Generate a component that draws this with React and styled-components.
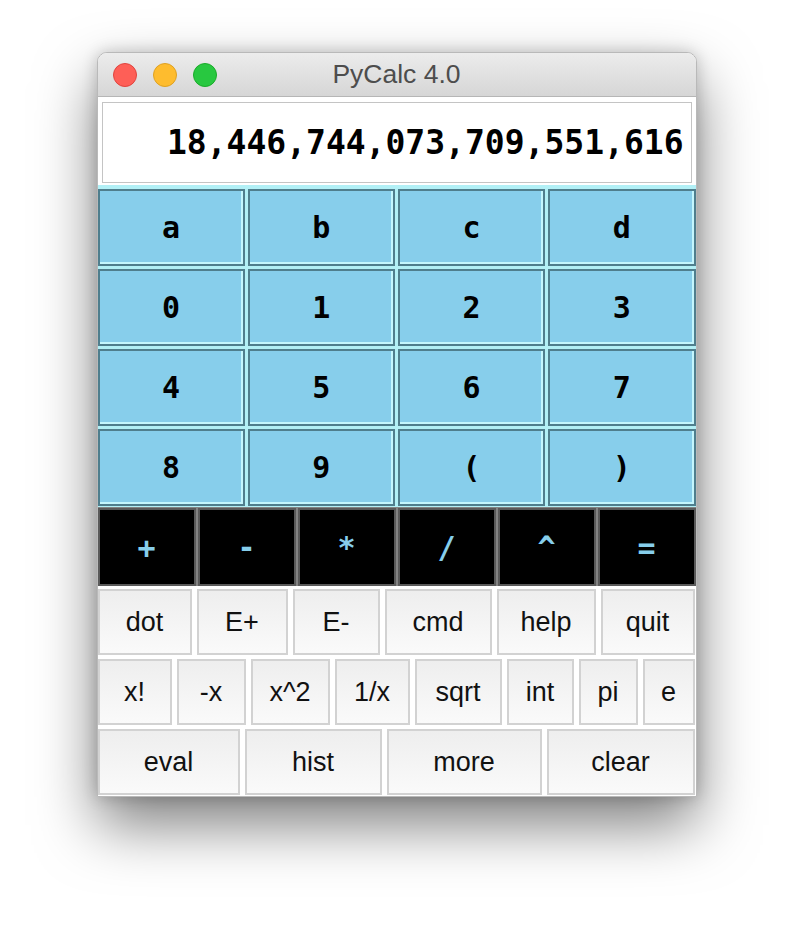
import React from 'react';
import styled, { createGlobalStyle } from 'styled-components';

const GlobalStyle = createGlobalStyle`
  html, body {
    margin: 0;
    padding: 0;
    background: #ffffff;
  }
  * {
    box-sizing: border-box;
  }
`;

const letterKeys = ['a', 'b', 'c', 'd', '0', '1', '2', '3', '4', '5', '6', '7', '8', '9', '(', ')'];
const opKeys = ['+', '-', '*', '/', '^', '='];

const toolRows = [
  [['dot', 94], ['E+', 91], ['E-', 87], ['cmd', 107], ['help', 99], ['quit', 94]],
  [['x!', 74], ['-x', 69], ['x^2', 79], ['1/x', 75], ['sqrt', 87], ['int', 67], ['pi', 59], ['e', 52]],
  [['eval', 142], ['hist', 137], ['more', 155], ['clear', 148]],
];

const App = () => {
  return (
    <Page>
      <GlobalStyle />
      <Window>
        <TitleBar>
          <Lights>
            <Light color="#fe5f57" edge="#e0443e" />
            <Light color="#febc2e" edge="#dea123" />
            <Light color="#28c840" edge="#1aab29" />
          </Lights>
          <Title>PyCalc 4.0</Title>
        </TitleBar>
        <DisplayArea>
          <Display>18,446,744,073,709,551,616</Display>
        </DisplayArea>
        <KeyGrid>
          {letterKeys.map((k) => (
            <SkyKey key={k}>{k}</SkyKey>
          ))}
        </KeyGrid>
        <OpRow>
          {opKeys.map((k) => (
            <OpKey key={k}>{k}</OpKey>
          ))}
        </OpRow>
        <ToolArea>
          {toolRows.map((row, i) => (
            <ToolRow key={i}>
              {row.map(([label, w]) => (
                <ToolKey key={label} w={w}>{label}</ToolKey>
              ))}
            </ToolRow>
          ))}
        </ToolArea>
      </Window>
    </Page>
  );
};

const Page = styled.div`
  width: 793px;
  height: 945px;
  padding-top: 52px;
  display: flex;
  justify-content: center;
  align-items: flex-start;
`;

const Window = styled.div`
  width: 600px;
  display: flex;
  flex-direction: column;
  background: #ffffff;
  border: 1px solid #b9b9b9;
  border-radius: 10px 10px 0 0;
  overflow: hidden;
  box-shadow: 0 28px 60px rgba(0, 0, 0, 0.5), 0 0 16px rgba(0, 0, 0, 0.2);
`;

const TitleBar = styled.div`
  position: relative;
  height: 44px;
  display: flex;
  align-items: center;
  justify-content: center;
  background: linear-gradient(#ececec, #d6d6d6);
  border-bottom: 1px solid #b6b6b6;
`;

const Lights = styled.div`
  position: absolute;
  left: 15px;
  top: 10px;
  display: flex;
  gap: 16px;
`;

const Light = styled.span`
  width: 24px;
  height: 24px;
  border-radius: 50%;
  background: ${(p) => p.color};
  border: 1px solid ${(p) => p.edge};
`;

const Title = styled.div`
  font-family: "Liberation Sans", Arial, sans-serif;
  font-size: 26.5px;
  color: #4d4d4d;
`;

const DisplayArea = styled.div`
  padding: 5px 4px 2px 4px;
`;

const Display = styled.div`
  height: 81px;
  border: 1px solid #c4c4c4;
  background: #ffffff;
  display: flex;
  align-items: center;
  justify-content: flex-end;
  padding-right: 7px;
  font-family: "DejaVu Sans Mono", "Liberation Mono", monospace;
  font-weight: bold;
  font-size: 33px;
  color: #000000;
`;

const KeyGrid = styled.div`
  display: grid;
  grid-template-columns: repeat(4, 1fr);
  grid-auto-rows: 77px;
  gap: 3px;
  padding: 4px 0 2px 0;
  background: #b2f0f6;
`;

const SkyKey = styled.div`
  display: flex;
  align-items: center;
  justify-content: center;
  background: #87ceeb;
  border: 2px solid #4f7e8d;
  box-shadow: inset -2px -2px 0 #c4f6fd;
  font-family: "DejaVu Sans Mono", "Liberation Mono", monospace;
  font-weight: bold;
  font-size: 30px;
  color: #000000;
`;

const OpRow = styled.div`
  display: grid;
  grid-template-columns: repeat(6, 1fr);
  gap: 2px;
  height: 78px;
  background: #707070;
`;

const OpKey = styled.div`
  display: flex;
  align-items: center;
  justify-content: center;
  background: #000000;
  border: 2px solid #5a5a5a;
  box-shadow: 0 0 0 1px #848484;
  font-family: "DejaVu Sans Mono", "Liberation Mono", monospace;
  font-weight: bold;
  font-size: 30px;
  color: #87ceeb;
`;

const ToolArea = styled.div`
  display: flex;
  flex-direction: column;
  gap: 4px;
  padding: 3px 1px 1px 0;
  background: #ffffff;
`;

const ToolRow = styled.div`
  display: flex;
  gap: 5px;
  height: 66px;
`;

const ToolKey = styled.div`
  flex: 0 0 ${(p) => p.w}px;
  display: flex;
  align-items: center;
  justify-content: center;
  background: linear-gradient(#eeeeee, #fafafa);
  border: 2px solid #d2d2d2;
  font-family: "Liberation Sans", Arial, sans-serif;
  font-size: 27px;
  color: #111111;
`;

export default App;
